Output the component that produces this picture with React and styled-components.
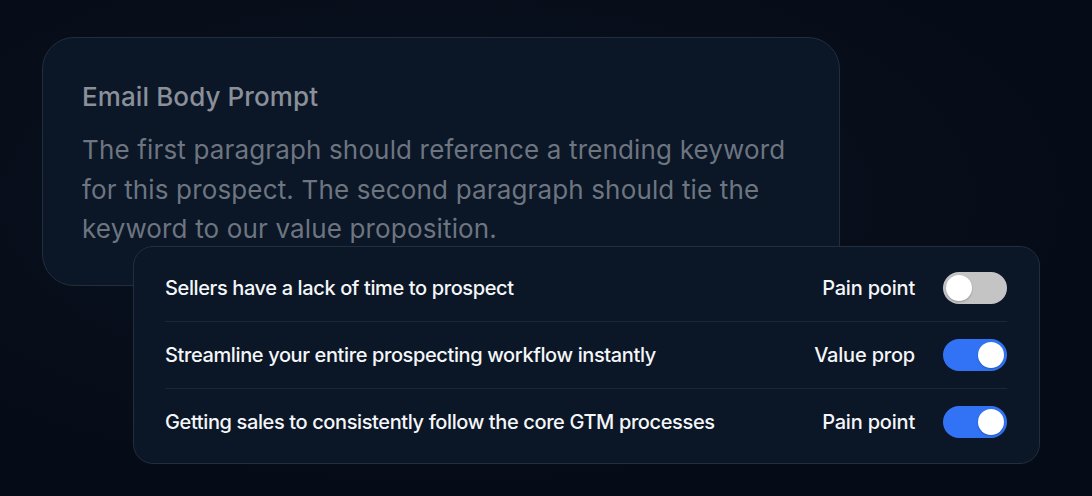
import React, { useState } from "react";
import styled, { createGlobalStyle } from "styled-components";

const Global = createGlobalStyle`
  html, body { margin: 0; padding: 0; }
  body {
    background: #060c17;
    font-family: Inter, "Noto Sans", sans-serif;
    -webkit-font-smoothing: antialiased;
  }
`;

const Page = styled.div`
  width: 1092px;
  height: 496px;
  box-sizing: border-box;
  padding: 37px 0 0 42px;
  background: radial-gradient(ellipse at 40% 40%, #0a1322 0%, #060c17 70%);
  overflow: hidden;
`;

const PromptCard = styled.section`
  box-sizing: border-box;
  width: 798px;
  height: 249px;
  padding: 43px 30px 0 39px;
  background: #0b1626;
  border: 1px solid #222d3d;
  border-radius: 32px;
`;

const PromptTitle = styled.h2`
  margin: 0;
  font-size: 26px;
  line-height: 32px;
  font-weight: 500;
  color: #8a9099;
  letter-spacing: 0.1px;
`;

const PromptBody = styled.p`
  margin: 17px 0 0;
  font-size: 26px;
  line-height: 39.5px;
  font-weight: 400;
  color: #6d7580;
  letter-spacing: 0.15px;
  white-space: nowrap;
`;

const ListCard = styled.section`
  position: relative;
  box-sizing: border-box;
  width: 907px;
  margin: -40px 0 0 91px;
  padding: 8px 32px 8px 31px;
  background: #0b1626;
  border: 1px solid #222d3d;
  border-radius: 20px;
`;

const Row = styled.div`
  display: flex;
  align-items: center;
  height: 66px;
  border-top: ${(p) => (p.$first ? "none" : "1px solid #1c2636")};
`;

const RowText = styled.span`
  flex: 1;
  font-size: 20px;
  font-weight: 500;
  color: #f4f6f9;
  letter-spacing: -0.38px;
`;

const Tag = styled.span`
  font-size: 20px;
  font-weight: 500;
  color: #f4f6f9;
  margin-right: 28px;
  letter-spacing: -0.2px;
`;

const Track = styled.button`
  position: relative;
  width: 64px;
  height: 32px;
  padding: 0;
  border: none;
  border-radius: 16px;
  cursor: pointer;
  background: ${(p) => (p.$on ? "#3273f6" : "#c4c4c4")};
  flex-shrink: 0;
`;

const Knob = styled.span`
  position: absolute;
  top: 3px;
  left: ${(p) => (p.$on ? "35px" : "3px")};
  width: 26px;
  height: 26px;
  border-radius: 50%;
  background: #ffffff;
  box-shadow: 0 1px 2px rgba(0, 0, 0, 0.25);
`;

const Toggle = ({ initial }) => {
  const [on, setOn] = useState(initial);
  return (
    <Track $on={on} onClick={() => setOn(!on)} aria-pressed={on}>
      <Knob $on={on} />
    </Track>
  );
};

const rows = [
  { text: "Sellers have a lack of time to prospect", tag: "Pain point", on: false },
  { text: "Streamline your entire prospecting workflow instantly", tag: "Value prop", on: true },
  { text: "Getting sales to consistently follow the core GTM processes", tag: "Pain point", on: true },
];

export default function App() {
  return (
    <>
      <Global />
      <Page>
        <PromptCard>
          <PromptTitle>Email Body Prompt</PromptTitle>
          <PromptBody>
            The first paragraph should reference a trending keyword
            <br />
            for this prospect. The second paragraph should tie the
            <br />
            keyword to our value proposition.
          </PromptBody>
        </PromptCard>
        <ListCard>
          {rows.map((r, i) => (
            <Row key={i} $first={i === 0}>
              <RowText>{r.text}</RowText>
              <Tag>{r.tag}</Tag>
              <Toggle initial={r.on} />
            </Row>
          ))}
        </ListCard>
      </Page>
    </>
  );
}
